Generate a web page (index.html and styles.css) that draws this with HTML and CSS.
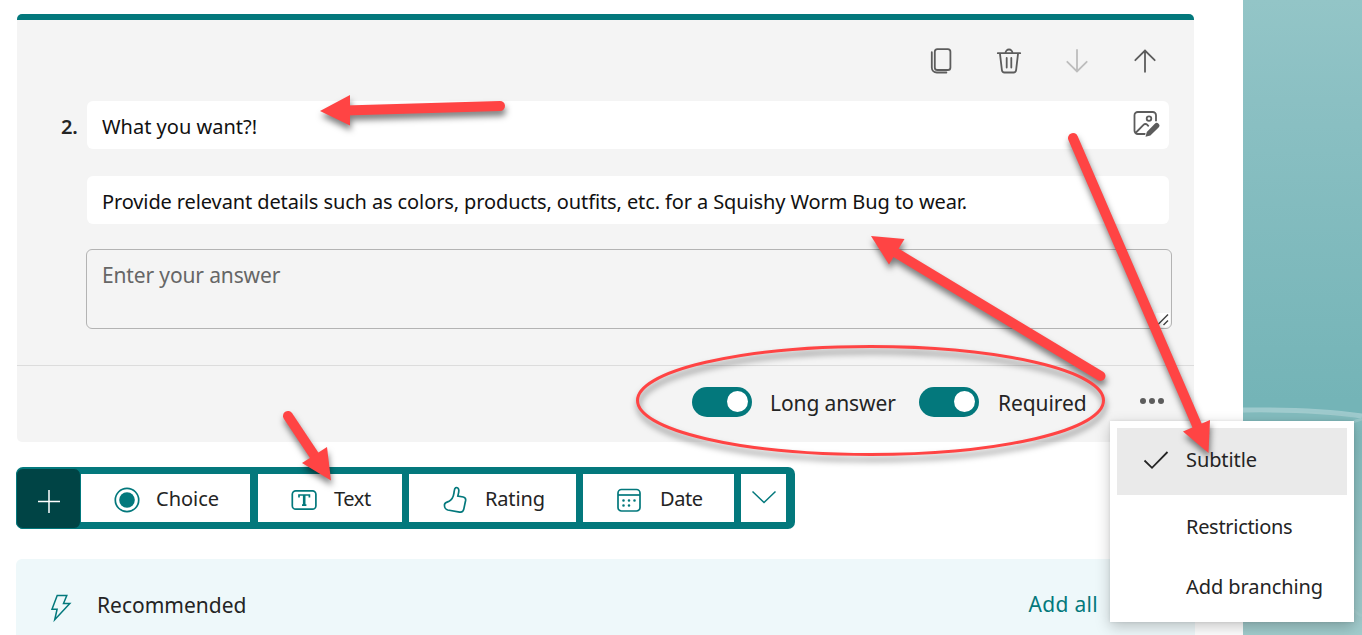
FILE: index.html
```html
<!DOCTYPE html>
<html lang="en">
<head>
<meta charset="utf-8">
<title>Form editor</title>
<link rel="stylesheet" href="styles.css">
</head>
<body>
<div class="app">
  <main class="page">
    <section class="card">
      <div class="card-tools">
        <svg class="tool" viewBox="0 0 28 28"><rect x="7.8" y="2.2" width="15.6" height="20.8" rx="2.6"/><path d="M4.8 5.2v15.3a5 5 0 0 0 5 5h9.6"/></svg>
        <svg class="tool" viewBox="0 0 28 28"><path d="M2.8 6.2h22.4M4.900 6.200l2 17a2.600 2.600 0 0 0 2.600 2.300h9a2.600 2.600 0 0 0 2.600-2.300l2-17M10.500 6a3.500 3.500 0 0 1 7 0M11.700 11v9.600M16.300 11v9.600"/></svg>
        <svg class="tool tool-off" viewBox="0 0 28 28"><path d="M14 3v21.300M4.300 14.800l9.700 9.700 9.700-9.700"/></svg>
        <svg class="tool" viewBox="0 0 28 28"><path d="M14 24.800V3.500M4.300 13.200L14 3.500l9.700 9.700"/></svg>
      </div>
      <div class="question">
        <span class="number">2.</span>
        <div class="fields">
          <div class="field"><span class="t-title">What you want?!</span>
            <svg class="media" viewBox="0 0 28 28"><path d="M13.500 24H5.800A3.300 3.300 0 0 1 2.500 20.700V5.300A3.300 3.300 0 0 1 5.800 2h14.900A3.300 3.300 0 0 1 24 5.300v6M3.500 23l8.200-8.300a2.400 2.400 0 0 1 3.400 0l1.600 1.600"/><circle cx="17" cy="8.600" r="2.300"/><path class="pen" d="M13.500 26.800l1.300-4.900 8-8.200a2.600 2.600 0 0 1 3.800 3.700l-8.200 8.200z"/></svg>
          </div>
          <div class="field"><span class="t-sub">Provide relevant details such as colors, products, outfits, etc. for a Squishy Worm Bug to wear.</span></div>
          <div class="answer"><span class="t-answer">Enter your answer</span>
            <svg class="grip" viewBox="0 0 14 14"><path d="M1.500 12L12 1.500M7.500 12L12 7.500"/></svg>
          </div>
        </div>
      </div>
      <div class="card-foot">
        <span class="toggle"></span><span class="t-long">Long answer</span>
        <span class="toggle"></span><span class="t-req">Required</span>
        <span class="more"><i></i><i></i><i></i></span>
      </div>
    </section>

    <nav class="types">
      <span class="plus"><svg viewBox="0 0 24 24"><path d="M1 12.500h22M12 1v23"/></svg></span>
      <span class="type choice"><svg viewBox="0 0 28 28"><circle cx="14" cy="14" r="11.700"/><circle class="solid" cx="14" cy="14" r="7.800"/></svg><b class="t-choice">Choice</b></span>
      <span class="type text"><svg viewBox="0 0 28 28"><rect x="2.300" y="4.800" width="23.600" height="18.400" rx="3.500"/><path d="M9 11.500V9h10.400v2.500M12 19.200h4.400"/><path class="stem" d="M14.200 9v10"/></svg><b class="t-text">Text</b></span>
      <span class="type rating"><svg viewBox="0 0 28 28"><path d="M14.600 1.800c1.500-.8 3 .3 3.200 2.300.2 2.300-.6 4-1 6l5.400.9c1.800.4 2.700 1.700 2.400 3.500l-1.800 8.700c-.5 2.200-2 3.300-4.200 2.900L6.800 24c-1.700-.4-3.600-2.400-3.300-5.500.3-1.800 2.200-2.300 4.200-3 3-1.600 4.800-5.400 5.200-8.200.4-1.800.2-4.700 1.700-5.500z"/></svg><b class="t-rating">Rating</b></span>
      <span class="type date"><svg viewBox="0 0 28 28"><rect x="3" y="3.500" width="22" height="21.500" rx="3.500"/><path d="M3 9h22"/><path class="dots" d="M8.500 14.500h.01M14 14.500h.01M19.500 14.500h.01M8.500 19.500h.01M14 19.500h.01"/></svg><b class="t-date">Date</b></span>
      <span class="type drop"><svg viewBox="0 0 28 28"><path d="M2.500 8.500L14 19.500l11.500-11"/></svg></span>
    </nav>

    <section class="recommended">
      <svg class="bolt" viewBox="0 0 24 30"><path d="M8.200 2.500h9.600l-3.300 8h6.300L5.700 26.800l2.400-10.600H3z"/></svg>
      <span class="t-rec">Recommended</span>
      <span class="t-all">Add all</span>
    </section>
  </main>
  <aside class="theme">
    <svg viewBox="0 0 119 635" preserveAspectRatio="none">
      <path class="hill" d="M0 412Q60 407 119 419V635H0z"/>
      <path class="wave" d="M0 410Q70 409 119 416"/>
      <path class="wave thin" d="M60 460Q95 425 119 419M80 570Q105 610 119 616"/>
    </svg>
  </aside>
</div>

<div class="menu">
  <div class="item on"><svg viewBox="0 0 26 20"><path d="M1.500 10.500L9 17.800 24.500 2"/></svg><span class="t-m1">Subtitle</span></div>
  <div class="item"><span class="t-m2">Restrictions</span></div>
  <div class="item"><span class="t-m3">Add branching</span></div>
</div>

<svg class="marks" viewBox="0 0 1362 635">
  <ellipse cx="870.500" cy="400.500" rx="233" ry="54"/>
  <g class="arrow"><path class="shaft" d="M500 106L345 110.500"/><path d="M320 111L350 95V125.500z"/></g>
  <g class="arrow"><path class="shaft" d="M1100.500 376L893 251"/><path d="M871 236L904.500 239 889 264.500z"/></g>
  <g class="arrow"><path class="shaft" d="M1073 138L1199 430"/><path d="M1208.500 453L1183 431.500 1210 420z"/></g>
  <g class="arrow"><path class="shaft" d="M288 416L316 458"/><path d="M331 480.500L302 463 327 447z"/></g>
</svg>
</body>
</html>
```

FILE: styles.css
```css
* { box-sizing: border-box; }
body {
  margin: 0;
  height: 635px;
  overflow: hidden;
  position: relative;
  font: 20px/30px "Noto Sans", "Open Sans", sans-serif;
  color: #242424;
  background: #fff;
}
svg { display: block; fill: none; stroke: currentColor; flex: none; }
span, b { white-space: nowrap; font-weight: 400; }

.app { display: flex; height: 635px; }
.page { width: 1243px; padding: 14px 0 0 16px; }
.theme { flex: 1; background: linear-gradient(#93c5c7 0, #8bc0c3 100px, #74b4b7 400px, #74b4b7 430px, #a3cccd 635px); }
.theme svg { width: 119px; height: 635px; stroke: none; }
.hill { fill: #a0cacc; opacity: .35; }
.theme .wave { stroke: #a9d0d2; stroke-width: 5; opacity: .8; }
.theme .thin { stroke-width: 3; opacity: .5; }

.card {
  width: 1177px;
  height: 428px;
  margin-left: 1px;
  border-top: 6px solid #03787c;
  border-radius: 5px;
  background: #f4f4f4;
  display: flex;
  flex-direction: column;
}
.card-tools { height: 81px; padding: 27px 35px 0 0; display: flex; justify-content: flex-end; gap: 40px; color: #5c5c5c; }
.tool { width: 28px; height: 28px; stroke-width: 1.8; stroke-linecap: round; }
.tool-off { color: #bdbdbd; }
.question { height: 264px; display: flex; padding-left: 44px; }
.number { width: 26px; padding-top: 11px; font-weight: 600; letter-spacing: -.3px; }
.fields { width: 1082px; display: flex; flex-direction: column; gap: 27px; }
.field { height: 48px; padding: 4px 9px 0 15px; border-radius: 6px; background: #fff; color: #111; display: flex; align-items: center; justify-content: space-between; }
.media { width: 28px; height: 28px; stroke-width: 1.8; color: #5c5c5c; margin-top: -6px; }
.pen { fill: #5c5c5c; stroke: #fff; stroke-width: 1; paint-order: stroke; }
.t-sub { letter-spacing: -.112px; }
.answer { width: 1086px; height: 80px; margin: -2px 0 0 -1px; padding: 10px 1px 1px 15px; border: 1px solid #b3b3b3; border-radius: 6px; color: #666; display: flex; justify-content: space-between; }
.t-answer { font-size: 21px; letter-spacing: -.14px; }
.grip { width: 14px; height: 14px; align-self: flex-end; color: #444; stroke-width: 1.5; background: #fff; border-radius: 0 0 5px; }
.card-foot { height: 77px; border-top: 1px solid #dcdcdc; display: flex; align-items: center; padding: 0 30px 4px 0; justify-content: flex-end; font-size: 21px; }
.toggle { width: 60px; height: 30px; border-radius: 15px; background: #03787c; display: flex; align-items: center; justify-content: flex-end; padding: 0 4px 1px 0; }
.toggle::after { content: ""; width: 21px; height: 21px; border-radius: 50%; background: #fff; }
.t-long { width: 149px; margin-left: 18px; padding-top: 2px; letter-spacing: -.1px; }
.t-req { width: 142px; margin-left: 19px; padding-top: 2px; letter-spacing: -.08px; }
.more { display: flex; gap: 3px; padding-bottom: 2px; }
.more i { width: 6px; height: 6px; border-radius: 50%; background: #5c5c5c; }

.types { width: 779px; height: 62px; margin-top: 25px; border-radius: 7px; background: #03787c; color: #03787c; display: flex; align-items: center; }
.plus { width: 65px; height: 61px; border: 1px solid #03787c; border-radius: 7px; background: #004445; color: #fff; display: flex; align-items: center; justify-content: center; padding-top: 6px; }
.plus svg { width: 24px; height: 24px; stroke-width: 1.5; }
.type { height: 48px; background: #fff; display: flex; align-items: center; margin-right: 7px; }
.type svg { width: 28px; height: 28px; stroke-width: 1.7; margin-top: 3px; }
.type b { color: #242424; padding-top: 1px; }
.type .solid { fill: currentColor; stroke: none; }
.stem { stroke-width: 2.6; }
.dots { stroke-width: 2.6; stroke-linecap: round; }
.choice { width: 169px; padding-left: 32px; gap: 15px; margin-right: 8px; }
.text { width: 144px; padding-left: 32px; gap: 16px; }
.rating { width: 167px; padding-left: 32px; gap: 16px; }
.date { width: 151px; padding-left: 32px; gap: 17px; }
.t-text, .t-date { letter-spacing: -.4px; }
.t-rating { letter-spacing: -.15px; }
.type.drop { width: 45px; padding-left: 9px; }
.drop svg { margin-top: -3px; stroke-width: 1.5; }

.recommended { width: 1179px; height: 76px; margin-top: 30px; padding: 16px 97px 0 32px; border-radius: 6px 6px 0 0; background: #eef8fa; display: flex; align-items: center; font-size: 21px; }
.bolt { width: 24px; height: 30px; stroke-width: 1.5; color: #03787c; margin: 6px 24px 0 1px; }
.t-all { margin-left: auto; padding-bottom: 2px; color: #03787c; letter-spacing: .3px; }

.menu { position: absolute; left: 1110px; top: 421px; width: 244px; height: 201px; padding: 7px; background: #fff; box-shadow: 0 5px 14px rgba(0, 0, 0, .22), 0 0 3px rgba(0, 0, 0, .1); }
.item { height: 60px; padding: 0 0 1px 69px; display: flex; align-items: center; }
.item.on { height: 67px; padding: 0 0 4px 26px; margin-bottom: 2px; background: #eaeaea; }
.item svg { width: 26px; height: 20px; margin-right: 17px; stroke-width: 1.8; }
.t-m1 { letter-spacing: -.1px; }
.t-m2 { letter-spacing: -.3px; }
.t-m3 { letter-spacing: -.08px; }

.marks { position: absolute; left: 0; top: 0; width: 1362px; height: 635px; stroke: none; color: #ff4444; filter: drop-shadow(1px 5px 3px rgba(0, 0, 0, .5)); }
.marks ellipse { stroke: currentColor; stroke-width: 3; }
.arrow { fill: currentColor; }
.shaft { stroke: currentColor; stroke-width: 10; stroke-linecap: round; }
```
